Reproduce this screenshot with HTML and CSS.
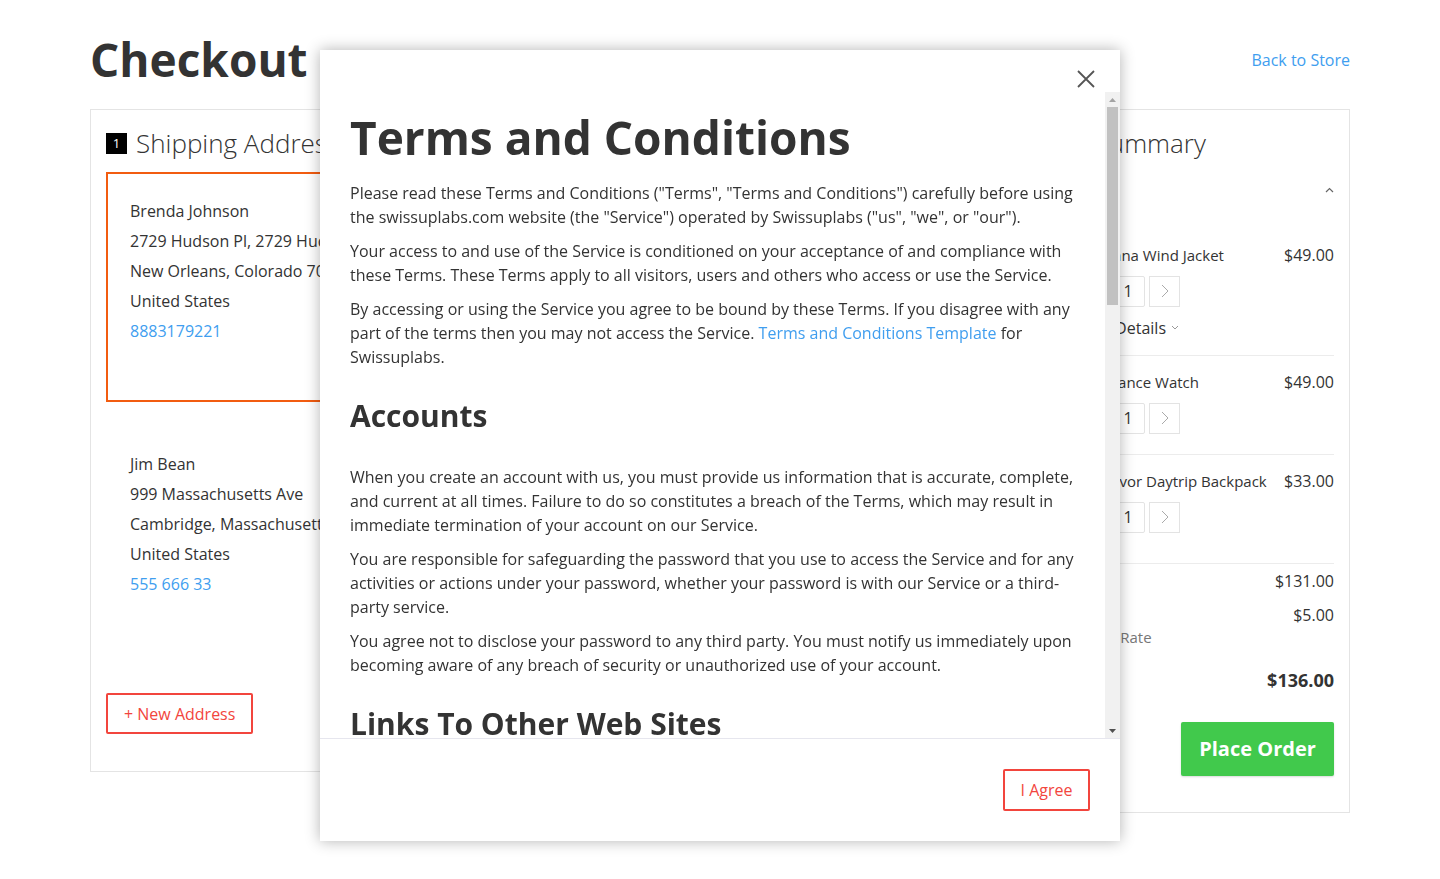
FILE: index.html
```html
<!DOCTYPE html>
<html lang="en">
<head>
<meta charset="utf-8">
<title>Checkout</title>
<link rel="stylesheet" href="styles.css">
</head>
<body>
<div class="page">
  <header class="page-header">
    <h1 class="page-title">Checkout</h1>
    <a class="back-link" href="#">Back to Store</a>
  </header>

  <div class="columns">
    <section class="box box-shipping">
      <div class="box-title">
        <span class="step">1</span>
        <span class="box-title-text">Shipping Address</span>
      </div>
      <div class="address-card is-selected">
        <div>Brenda Johnson</div>
        <div>2729 Hudson Pl, 2729 Hudson Pl</div>
        <div>New Orleans, Colorado 70112</div>
        <div>United States</div>
        <a class="phone" href="#">8883179221</a>
      </div>
      <div class="address-card">
        <div>Jim Bean</div>
        <div>999 Massachusetts Ave</div>
        <div>Cambridge, Massachusetts 02139</div>
        <div>United States</div>
        <a class="phone" href="#">555 666 33</a>
      </div>
      <button class="btn-outline new-address" type="button">+ New Address</button>
    </section>

    <section class="box box-summary">
      <div class="box-title">
        <span class="box-title-text">Order Summary</span>
      </div>
      <div class="items-toggle">
        <span class="items-count">3 Items in Cart</span>
        <svg class="caret-up" width="9" height="6" viewBox="0 0 9 6"><polyline points="1,5 4.5,1.5 8,5" fill="none" stroke="#666" stroke-width="1.2"/></svg>
      </div>
      <ul class="items">
        <li class="item has-details">
          <div class="item-thumb"></div>
          <div class="item-info">
            <div class="item-row">
              <span class="item-name">Montana Wind Jacket</span>
              <span class="item-price">$49.00</span>
            </div>
            <div class="qty">
              <span class="qty-btn"><svg width="8" height="14" viewBox="0 0 8 14"><polyline points="7,1 1,7 7,13" fill="none" stroke="#aaa" stroke-width="1"/></svg></span>
              <span class="qty-input">1</span>
              <span class="qty-btn"><svg width="8" height="14" viewBox="0 0 8 14"><polyline points="1,1 7,7 1,13" fill="none" stroke="#aaa" stroke-width="1"/></svg></span>
            </div>
            <div class="details">View Details <svg width="8" height="5" viewBox="0 0 8 5"><polyline points="1,1 4,4 7,1" fill="none" stroke="#999" stroke-width="1"/></svg></div>
          </div>
        </li>
        <li class="item">
          <div class="item-thumb"></div>
          <div class="item-info">
            <div class="item-row">
              <span class="item-name">Endurance Watch</span>
              <span class="item-price">$49.00</span>
            </div>
            <div class="qty">
              <span class="qty-btn"><svg width="8" height="14" viewBox="0 0 8 14"><polyline points="7,1 1,7 7,13" fill="none" stroke="#aaa" stroke-width="1"/></svg></span>
              <span class="qty-input">1</span>
              <span class="qty-btn"><svg width="8" height="14" viewBox="0 0 8 14"><polyline points="1,1 7,7 1,13" fill="none" stroke="#aaa" stroke-width="1"/></svg></span>
            </div>
          </div>
        </li>
        <li class="item">
          <div class="item-thumb"></div>
          <div class="item-info">
            <div class="item-row">
              <span class="item-name">Endeavor Daytrip Backpack</span>
              <span class="item-price">$33.00</span>
            </div>
            <div class="qty">
              <span class="qty-btn"><svg width="8" height="14" viewBox="0 0 8 14"><polyline points="7,1 1,7 7,13" fill="none" stroke="#aaa" stroke-width="1"/></svg></span>
              <span class="qty-input">1</span>
              <span class="qty-btn"><svg width="8" height="14" viewBox="0 0 8 14"><polyline points="1,1 7,7 1,13" fill="none" stroke="#aaa" stroke-width="1"/></svg></span>
            </div>
          </div>
        </li>
      </ul>
      <div class="totals">
        <div class="total-row">
          <span class="total-label">Subtotal</span>
          <span>$131.00</span>
        </div>
        <div class="total-row total-shipping">
          <span class="total-label">Shipping<span class="method">Flat Rate - Flat Rate</span></span>
          <span>$5.00</span>
        </div>
        <div class="total-row grand">
          <span class="total-label">Order Total</span>
          <span>$136.00</span>
        </div>
      </div>
      <div class="place-wrap">
        <button class="btn-place" type="button">Place Order</button>
      </div>
    </section>
  </div>
</div>

<div class="modal" role="dialog">
  <div class="modal-header">
    <button class="modal-close" type="button" aria-label="Close">
      <svg width="18" height="18" viewBox="0 0 18 18"><path d="M1 1 L17 17 M17 1 L1 17" stroke="#555" stroke-width="1.8" fill="none"/></svg>
    </button>
  </div>
  <div class="modal-body">
    <h1>Terms and Conditions</h1>
    <p>Please read these Terms and Conditions ("Terms", "Terms and Conditions") carefully before using the swissuplabs.com website (the "Service") operated by Swissuplabs ("us", "we", or "our").</p>
    <p>Your access to and use of the Service is conditioned on your acceptance of and compliance with these Terms. These Terms apply to all visitors, users and others who access or use the Service.</p>
    <p>By accessing or using the Service you agree to be bound by these Terms. If you disagree with any part of the terms then you may not access the Service. <a href="#">Terms and Conditions Template</a> for Swissuplabs.</p>
    <h2>Accounts</h2>
    <p>When you create an account with us, you must provide us information that is accurate, complete, and current at all times. Failure to do so constitutes a breach of the Terms, which may result in immediate termination of your account on our Service.</p>
    <p>You are responsible for safeguarding the password that you use to access the Service and for any activities or actions under your password, whether your password is with our Service or a third-party service.</p>
    <p>You agree not to disclose your password to any third party. You must notify us immediately upon becoming aware of any breach of security or unauthorized use of your account.</p>
    <h2>Links To Other Web Sites</h2>
    <p>Our Service may contain links to third-party web sites or services that are not owned or controlled by Swissuplabs.</p>
    <p>Swissuplabs has no control over, and assumes no responsibility for, the content, privacy policies, or practices of any third party web sites or services. You further acknowledge and agree that Swissuplabs shall not be responsible or liable, directly or indirectly, for any damage or loss caused or alleged to be caused by or in connection with use of or reliance on any such content, goods or services available on or through any such web sites or services.</p>
    <p>We strongly advise you to read the terms and conditions and privacy policies of any third-party web sites or services that you visit.</p>
    <h2>Termination</h2>
    <p>We may terminate or suspend access to our Service immediately, without prior notice or liability, for any reason whatsoever, including without limitation if you breach the Terms.</p>
    <p>All provisions of the Terms which by their nature should survive termination shall survive termination, including, without limitation, ownership provisions, warranty disclaimers, indemnity and limitations of liability.</p>
    <p>We may terminate or suspend your account immediately, without prior notice or liability, for any reason whatsoever, including without limitation if you breach the Terms.</p>
    <p>Upon termination, your right to use the Service will immediately cease. If you wish to terminate your account, you may simply discontinue using the Service.</p>
    <h2>Governing Law</h2>
    <p>These Terms shall be governed and construed in accordance with the laws of Switzerland, without regard to its conflict of law provisions.</p>
    <p>Our failure to enforce any right or provision of these Terms will not be considered a waiver of those rights. If any provision of these Terms is held to be invalid or unenforceable by a court, the remaining provisions of these Terms will remain in effect. These Terms constitute the entire agreement between us regarding our Service, and supersede and replace any prior agreements we might have between us regarding the Service.</p>
    <h2>Changes</h2>
    <p>We reserve the right, at our sole discretion, to modify or replace these Terms at any time. If a revision is material we will try to provide at least 30 days notice prior to any new terms taking effect. What constitutes a material change will be determined at our sole discretion.</p>
    <p>By continuing to access or use our Service after those revisions become effective, you agree to be bound by the revised terms. If you do not agree to the new terms, please stop using the Service.</p>
    <h2>Contact Us</h2>
    <p>If you have any questions about these Terms, please contact us.</p>
  </div>
  <div class="scrollbar" aria-hidden="true">
    <span class="sb-arrow sb-up"><svg width="7" height="4" viewBox="0 0 7 4"><polygon points="0,4 3.5,0 7,4" fill="#a3a3a3"/></svg></span>
    <span class="sb-track"><span class="sb-thumb"></span></span>
    <span class="sb-arrow sb-down"><svg width="7" height="4" viewBox="0 0 7 4"><polygon points="0,0 7,0 3.5,4" fill="#505050"/></svg></span>
  </div>
  <div class="modal-footer">
    <button class="btn-outline" type="button">I Agree</button>
  </div>
</div>
</body>
</html>
```

FILE: styles.css
```css
* { box-sizing: border-box; }

html, body {
  margin: 0;
  padding: 0;
  background: #fff;
}

body {
  font-family: "Open Sans", "Liberation Sans", sans-serif;
  font-size: 16px;
  color: #333;
}

a { color: #409eef; text-decoration: none; }

.page {
  width: 1260px;
  margin: 0 auto;
}

.page-header {
  display: flex;
  justify-content: space-between;
  align-items: flex-start;
  padding-top: 31.5px;
  margin-bottom: 22.3px;
}

.page-title {
  margin: 0;
  font-size: 46px;
  font-weight: 700;
  line-height: 1.2;
  color: #333;
}

.back-link {
  margin-top: 16.5px;
  font-size: 16px;
  line-height: 24px;
}

.columns {
  display: flex;
  align-items: flex-start;
  gap: 24px;
}

.box {
  border: 1px solid #e4e4e4;
  padding: 15px 15px 37px;
}

.box-shipping { flex: 1; }

.box-summary {
  width: 349px;
  flex: none;
  padding: 15px 15px 36px 16px;
}

.box-title {
  display: flex;
  align-items: center;
  gap: 9px;
  height: 36px;
}

.step {
  width: 21px;
  height: 21px;
  margin-top: 2px;
  background: #000;
  color: #fff;
  font-size: 13px;
  line-height: 21px;
  text-align: center;
}

.box-title-text {
  font-size: 26px;
  font-weight: 300;
  line-height: 36px;
}

.address-card {
  margin-top: 11px;
  height: 230px;
  border: 2px solid transparent;
  padding: 22px;
  line-height: 30px;
  font-size: 16px;
}

.address-card + .address-card { margin-top: 23px; }

.address-card.is-selected { border-color: #f25c10; }

.phone { display: block; }

.btn-outline {
  font-family: inherit;
  font-size: 16px;
  line-height: 24px;
  color: #f2453d;
  background: #fff;
  border: 2px solid #f2453d;
  border-radius: 2px;
  padding: 7px 16px 6px;
  cursor: pointer;
}

.new-address { margin-top: 38px; }

.modal-footer .btn-outline { padding: 7px 15.5px 7px; }

/* summary */
.items-toggle {
  display: flex;
  justify-content: space-between;
  align-items: center;
  height: 30px;
  margin-top: 14px;
  margin-bottom: 24px;
}

.items-count {
  font-size: 14px;
  color: #333;
}

.items {
  list-style: none;
  margin: 0;
  padding: 0;
}

.item {
  display: flex;
  gap: 8px;
  padding: 15px 0 20px;
  border-bottom: 1px solid #ececec;
}

.item.has-details { padding-bottom: 16px; }

.item:last-child { border-bottom: 0; }

.item-thumb {
  width: 50px;
  height: 60px;
  flex: none;
  background: #f3f3f3;
}

.item-info { flex: 1; min-width: 0; }

.item-row {
  display: flex;
  justify-content: space-between;
  align-items: center;
  gap: 8px;
  height: 22px;
}

.item-name { font-size: 15px; white-space: nowrap; }

.item-price { font-size: 16px; }

.qty {
  display: flex;
  gap: 4px;
  margin-top: 10px;
}

.qty-btn {
  width: 31px;
  height: 31px;
  border: 1px solid #e3e3e3;
  display: flex;
  align-items: center;
  justify-content: center;
}

.qty-input {
  width: 34px;
  height: 31px;
  border: 1px solid #e3e3e3;
  border-radius: 2px;
  text-align: center;
  line-height: 29px;
  font-size: 16px;
}

.details {
  margin-top: 10px;
  line-height: 22px;
  font-size: 16px;
  display: flex;
  align-items: center;
  gap: 5px;
}

.totals {
  margin-top: 10px;
  border-top: 1px solid #ececec;
  padding-top: 5px;
}

.total-row {
  display: flex;
  justify-content: space-between;
  align-items: flex-start;
  line-height: 24px;
  font-size: 16px;
}

.total-label { font-size: 15px; }

.total-shipping { margin-top: 10px; }

.method {
  display: block;
  font-size: 15px;
  color: #777;
  line-height: 20px;
}

.grand {
  margin-top: 20px;
  font-size: 18px;
  font-weight: 700;
  line-height: 26px;
}

.grand .total-label { font-size: 15px; }

.place-wrap {
  display: flex;
  justify-content: flex-end;
  margin-top: 29px;
}

.btn-place {
  width: 153px;
  height: 54px;
  border: 0;
  border-radius: 2px;
  background: #41c94c;
  color: #fff;
  font-family: inherit;
  font-size: 20px;
  font-weight: 700;
  box-shadow: 0 1px 2px rgba(0,0,0,0.15);
  cursor: pointer;
}

/* modal */
.modal {
  position: fixed;
  left: 320px;
  top: 50px;
  width: 800px;
  height: 791px;
  background: #fff;
  box-shadow: 0 0 14px rgba(0,0,0,0.3);
  display: flex;
  flex-direction: column;
}

.modal-header {
  height: 42px;
  flex: none;
  position: relative;
}

.modal-close {
  position: absolute;
  top: 20px;
  right: 25px;
  width: 18px;
  height: 18px;
  padding: 0;
  border: 0;
  background: none;
  cursor: pointer;
}

.modal-close svg { display: block; }

.modal-body {
  flex: 1;
  overflow-y: scroll;
  scrollbar-width: none;
  padding: 0 45px 0 30px;
}

.modal-body::-webkit-scrollbar { display: none; width: 0; }

.modal-body h1 {
  margin: 17.5px 0 16px;
  font-size: 46px;
  font-weight: 700;
  line-height: 1.2;
  color: #333;
}

.modal-body h2 {
  margin: 29px 0 31.5px;
  font-size: 30px;
  font-weight: 700;
  line-height: 1.2;
  color: #333;
}

.modal-body p {
  margin: 0 0 10px;
  font-size: 16px;
  line-height: 24px;
}

/* fake classic scrollbar drawn over the body's right edge */
.scrollbar {
  position: absolute;
  top: 42px;
  right: 0;
  width: 15px;
  height: 646px;
  background: #f1f1f1;
  display: flex;
  flex-direction: column;
}

.sb-arrow {
  height: 15px;
  flex: none;
  display: flex;
  align-items: center;
  justify-content: center;
}

.sb-track {
  flex: 1;
  padding: 0 2px;
}

.sb-thumb {
  display: block;
  height: 198px;
  background: #c1c1c1;
}

.modal-footer {
  flex: none;
  border-top: 1px solid #e6e6ee;
  padding: 30px;
  display: flex;
  justify-content: flex-end;
}
```
